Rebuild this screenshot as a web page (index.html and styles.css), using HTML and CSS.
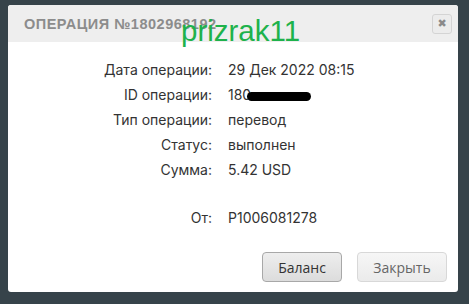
FILE: index.html
```html
<!DOCTYPE html>
<html lang="ru">
<head>
<meta charset="utf-8">
<link rel="stylesheet" href="styles.css">
</head>
<body>
<div class="modal">
  <div class="modal-header">
    <h3 class="modal-title">Операция №1802968192</h3>
    <button class="close-btn" type="button">&#x2716;</button>
  </div>
  <div class="watermark">prizrak11</div>
  <div class="modal-body">
    <dl class="details">
      <dt>Дата операции:</dt><dd>29 Дек 2022 08:15</dd>
      <dt>ID операции:</dt><dd>180<span class="redact"></span></dd>
      <dt>Тип операции:</dt><dd>перевод</dd>
      <dt>Статус:</dt><dd>выполнен</dd>
      <dt>Сумма:</dt><dd>5.42 USD</dd>
      <dt class="spaced">От:</dt><dd class="spaced">P1006081278</dd>
    </dl>
  </div>
  <div class="modal-footer">
    <button class="btn btn-dark" type="button">Баланс</button>
    <button class="btn btn-light" type="button">Закрыть</button>
  </div>
</div>
</body>
</html>
```
FILE: styles.css
```css
html, body {
  margin: 0;
  padding: 0;
  background: #36434a;
  height: 100%;
  overflow: hidden;
}
.modal {
  position: relative;
  margin: 5px 0 0 8px;
  width: 450px;
  height: 287px;
  background: #fff;
  border-radius: 3px;
  display: flex;
  flex-direction: column;
  overflow: hidden;
}
.modal-header {
  height: 37px;
  background: #eeeeee;
  display: flex;
  align-items: center;
  justify-content: space-between;
  padding: 0 6px 0 16px;
}
.modal-title {
  margin: 0;
  font-family: "Liberation Sans", sans-serif;
  font-weight: bold;
  font-size: 14.5px;
  letter-spacing: 0.5px;
  text-transform: uppercase;
  color: #8c8c8c;
}
.close-btn {
  width: 20px;
  height: 20px;
  padding: 0;
  border: 1px solid #d4d4d4;
  border-radius: 3px;
  background: #ececec;
  color: #8a8a8a;
  font-size: 11px;
  line-height: 18px;
  font-family: "DejaVu Sans", sans-serif;
}
.watermark {
  position: absolute;
  left: 173px;
  top: 9px;
  font-family: "Liberation Sans", sans-serif;
  font-size: 29.5px;
  line-height: 34px;
  color: #1eb24b;
}
.modal-body {
  flex: 1;
  padding-top: 15px;
  font-family: "Inter", sans-serif;
  font-size: 14px;
  color: #333;
}
.details {
  margin: 0;
  display: grid;
  grid-template-columns: 204px auto;
  column-gap: 16px;
  line-height: 25px;
}
.details dt {
  text-align: right;
}
.details dd {
  margin: 0;
}
.details .spaced {
  margin-top: 23px;
}
.redact {
  display: inline-block;
  width: 64px;
  height: 9px;
  margin-left: -4px;
  background: #000;
  border-radius: 5px;
  vertical-align: -1px;
}
.modal-footer {
  display: flex;
  justify-content: flex-end;
  gap: 15px;
  padding: 0 11px 10px 0;
}
.btn {
  height: 30px;
  border-radius: 4px;
  font-family: "Open Sans", sans-serif;
  font-size: 14px;
  padding: 0;
}
.btn-dark {
  width: 80px;
  border: 1px solid #a8a8a8;
  background: linear-gradient(#eeeeee, #dcdcdc);
  color: #333;
}
.btn-light {
  width: 90px;
  border: 1px solid #d8d8d8;
  background: linear-gradient(#f6f6f6, #ebebeb);
  color: #666;
}
```
